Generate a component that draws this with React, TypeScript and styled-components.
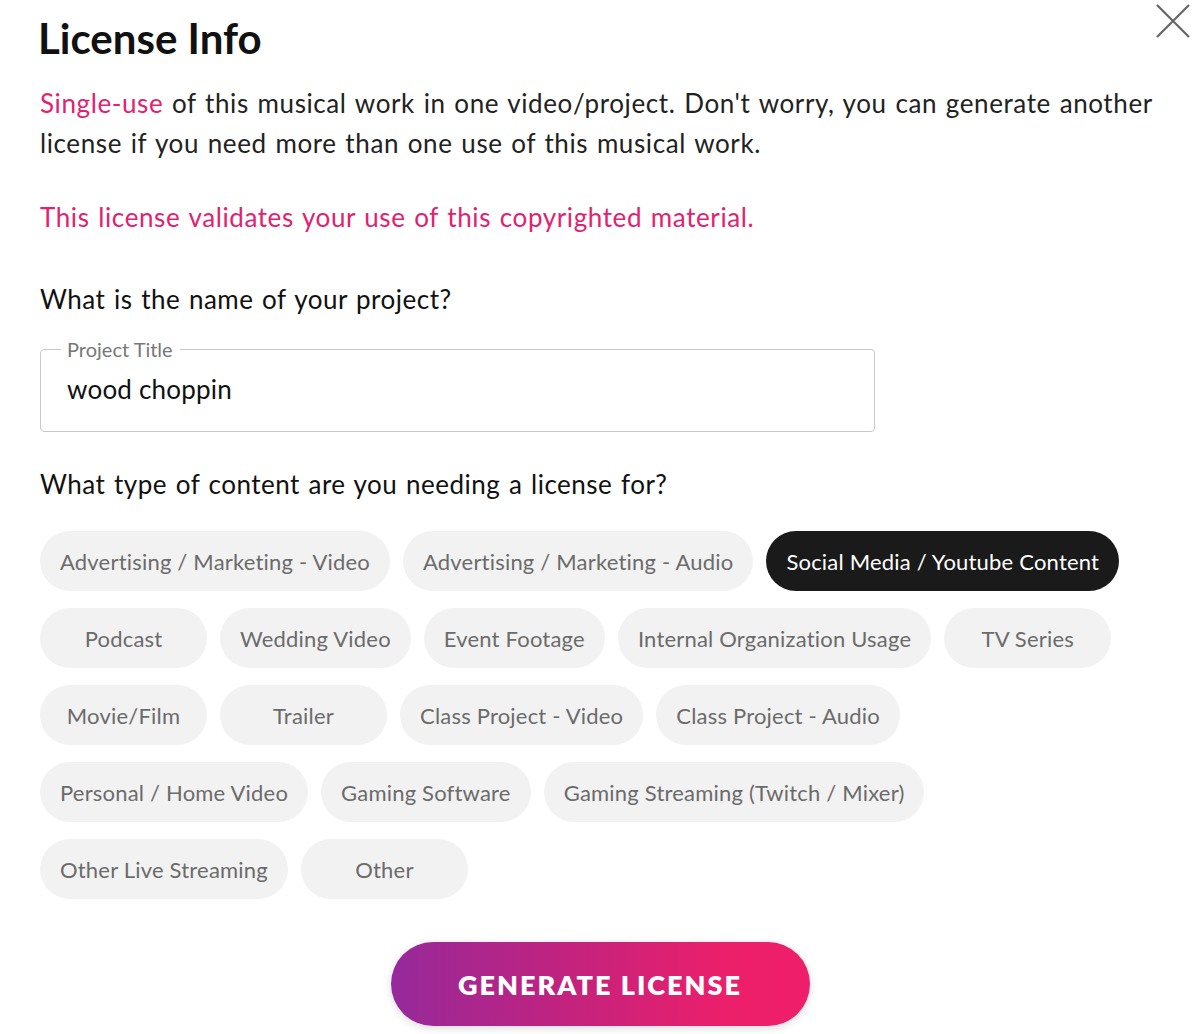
import React from "react";
import styled, { createGlobalStyle } from "styled-components";

const Global = createGlobalStyle`
  html, body { margin: 0; padding: 0; background: #fff; }
  body { font-family: "Lato", "Noto Sans", sans-serif; color: #1a1a1a; }
  * { box-sizing: border-box; }
`;

const Modal = styled.div`
  position: relative;
  width: 1200px;
  height: 1034px;
  padding: 12px 0 0 40px;
  display: flex;
  flex-direction: column;
  overflow: hidden;
`;

const Close = styled.button`
  position: absolute;
  top: 4px;
  right: 10px;
  width: 34px;
  height: 34px;
  padding: 0;
  border: none;
  background: transparent;
  cursor: pointer;
  svg { display: block; }
`;

const Title = styled.h1`
  margin: 0 0 0 -2px;
  font-size: 42px;
  line-height: 52px;
  font-weight: 700;
  color: #111;
`;

const Lead = styled.p`
  margin: 19px 0 0;
  font-size: 26px;
  line-height: 40px;
  letter-spacing: 0.6px;
  word-spacing: 1.5px;
  color: #222;
  width: 1150px;
`;

const Pink = styled.span`
  color: #e2226f;
`;

const Notice = styled.p`
  margin: 34px 0 0;
  font-size: 26px;
  line-height: 40px;
  letter-spacing: 0.6px;
  word-spacing: 1.5px;
  color: #e2226f;
`;

const Question = styled.h2<{ $top: number }>`
  margin: ${(p) => p.$top}px 0 0;
  font-size: 26px;
  line-height: 40px;
  letter-spacing: 0.5px;
  word-spacing: 1.5px;
  font-weight: 400;
  color: #111;
`;

const Field = styled.fieldset`
  margin: 20px 0 0;
  width: 835px;
  height: 93px;
  border: 1.5px solid #c8c8c8;
  border-radius: 4px;
  padding: 0 0 0 20px;
`;

const Legend = styled.legend`
  padding: 0 7px 0 6px;
  font-size: 20px;
  line-height: 20px;
  color: #777;
`;

const Value = styled.div`
  margin: 15px 0 0 6px;
  font-size: 26px;
  line-height: 30px;
  letter-spacing: 0.2px;
  color: #111;
`;

const Chips = styled.div`
  margin-top: 27px;
  display: flex;
  flex-wrap: wrap;
  width: 1110px;
  column-gap: 13px;
  row-gap: 17px;
`;

const Chip = styled.button<{ $active?: boolean }>`
  height: 60px;
  min-width: 167px;
  padding: 0 20px;
  border: none;
  border-radius: 30px;
  display: inline-flex;
  align-items: center;
  justify-content: center;
  font-family: inherit;
  font-size: 22px;
  letter-spacing: 0.2px;
  color: ${(p) => (p.$active ? "#fff" : "#6b6b6b")};
  background: ${(p) => (p.$active ? "#1a1a1a" : "#f2f2f2")};
  cursor: pointer;
`;

const Footer = styled.div`
  margin-top: 43px;
  display: flex;
  justify-content: center;
  padding-right: 40px;
`;

const Generate = styled.button`
  width: 419px;
  height: 84px;
  border: none;
  border-radius: 42px;
  background: linear-gradient(90deg, #96299b 0%, #c0237f 40%, #ec1f6b 80%, #ef1e6a 100%);
  box-shadow: 0 2px 8px rgba(0, 0, 0, 0.15);
  color: #fff;
  font-family: inherit;
  font-weight: 800;
  font-size: 27px;
  letter-spacing: 2px;
  cursor: pointer;
`;

const options = [
  "Advertising / Marketing - Video",
  "Advertising / Marketing - Audio",
  "Social Media / Youtube Content",
  "Podcast",
  "Wedding Video",
  "Event Footage",
  "Internal Organization Usage",
  "TV Series",
  "Movie/Film",
  "Trailer",
  "Class Project - Video",
  "Class Project - Audio",
  "Personal / Home Video",
  "Gaming Software",
  "Gaming Streaming (Twitch / Mixer)",
  "Other Live Streaming",
  "Other",
];

export default function App() {
  const [selected, setSelected] = React.useState("Social Media / Youtube Content");
  return (
    <>
      <Global />
      <Modal>
        <Close aria-label="Close">
          <svg width="34" height="34" viewBox="0 0 34 34">
            <path d="M1 1 L33 33 M33 1 L1 33" stroke="#666" strokeWidth="2.2" fill="none" />
          </svg>
        </Close>
        <Title>License Info</Title>
        <Lead>
          <Pink>Single-use</Pink> of this musical work in one video/project. Don't worry, you can generate another
          license if you need more than one use of this musical work.
        </Lead>
        <Notice>This license validates your use of this copyrighted material.</Notice>
        <Question $top={42}>What is the name of your project?</Question>
        <Field>
          <Legend>Project Title</Legend>
          <Value>wood choppin</Value>
        </Field>
        <Question $top={32}>What type of content are you needing a license for?</Question>
        <Chips>
          {options.map((o) => (
            <Chip key={o} $active={o === selected} onClick={() => setSelected(o)}>
              {o}
            </Chip>
          ))}
        </Chips>
        <Footer>
          <Generate>GENERATE LICENSE</Generate>
        </Footer>
      </Modal>
    </>
  );
}
